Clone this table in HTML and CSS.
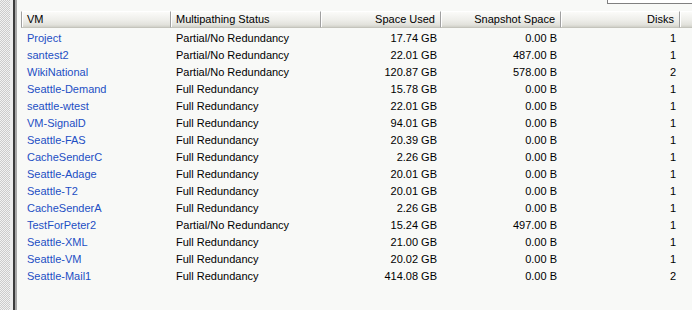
FILE: index.html
```html
<!DOCTYPE html>
<html>
<head>
<meta charset="utf-8">
<link rel="stylesheet" href="styles.css">
</head>
<body>
<div class="frame">
  <div class="side">
    <div class="checker"></div>
    <div class="light"></div>
    <div class="dark"></div>
    <div class="mid"></div>
  </div>
  <div class="main">
    <div class="topbar"><div class="box"></div></div>
    <div class="grid">
      <div class="hd">VM</div>
      <div class="hd">Multipathing Status</div>
      <div class="hd r">Space Used</div>
      <div class="hd r">Snapshot Space</div>
      <div class="hd r">Disks</div>
      <div class="hd last"></div>

      <div class="c link">Project</div><div class="c">Partial/No Redundancy</div><div class="c r">17.74 GB</div><div class="c r">0.00 B</div><div class="c r">1</div><div class="c"></div>
      <div class="c link">santest2</div><div class="c">Partial/No Redundancy</div><div class="c r">22.01 GB</div><div class="c r">487.00 B</div><div class="c r">1</div><div class="c"></div>
      <div class="c link">WikiNational</div><div class="c">Partial/No Redundancy</div><div class="c r">120.87 GB</div><div class="c r">578.00 B</div><div class="c r">2</div><div class="c"></div>
      <div class="c link">Seattle-Demand</div><div class="c">Full Redundancy</div><div class="c r">15.78 GB</div><div class="c r">0.00 B</div><div class="c r">1</div><div class="c"></div>
      <div class="c link">seattle-wtest</div><div class="c">Full Redundancy</div><div class="c r">22.01 GB</div><div class="c r">0.00 B</div><div class="c r">1</div><div class="c"></div>
      <div class="c link">VM-SignalD</div><div class="c">Full Redundancy</div><div class="c r">94.01 GB</div><div class="c r">0.00 B</div><div class="c r">1</div><div class="c"></div>
      <div class="c link">Seattle-FAS</div><div class="c">Full Redundancy</div><div class="c r">20.39 GB</div><div class="c r">0.00 B</div><div class="c r">1</div><div class="c"></div>
      <div class="c link">CacheSenderC</div><div class="c">Full Redundancy</div><div class="c r">2.26 GB</div><div class="c r">0.00 B</div><div class="c r">1</div><div class="c"></div>
      <div class="c link">Seattle-Adage</div><div class="c">Full Redundancy</div><div class="c r">20.01 GB</div><div class="c r">0.00 B</div><div class="c r">1</div><div class="c"></div>
      <div class="c link">Seattle-T2</div><div class="c">Full Redundancy</div><div class="c r">20.01 GB</div><div class="c r">0.00 B</div><div class="c r">1</div><div class="c"></div>
      <div class="c link">CacheSenderA</div><div class="c">Full Redundancy</div><div class="c r">2.26 GB</div><div class="c r">0.00 B</div><div class="c r">1</div><div class="c"></div>
      <div class="c link">TestForPeter2</div><div class="c">Partial/No Redundancy</div><div class="c r">15.24 GB</div><div class="c r">497.00 B</div><div class="c r">1</div><div class="c"></div>
      <div class="c link">Seattle-XML</div><div class="c">Full Redundancy</div><div class="c r">21.00 GB</div><div class="c r">0.00 B</div><div class="c r">1</div><div class="c"></div>
      <div class="c link">Seattle-VM</div><div class="c">Full Redundancy</div><div class="c r">20.02 GB</div><div class="c r">0.00 B</div><div class="c r">1</div><div class="c"></div>
      <div class="c link">Seattle-Mail1</div><div class="c">Full Redundancy</div><div class="c r">414.08 GB</div><div class="c r">0.00 B</div><div class="c r">2</div><div class="c"></div>
    </div>
  </div>
</div>
</body>
</html>
```

FILE: styles.css
```css
html, body {
  margin: 0;
  padding: 0;
  background: #f8f9f7;
}
body {
  font-family: "Liberation Sans", Arial, sans-serif;
  font-size: 11px;
  color: #000;
}
.frame {
  display: flex;
  width: 692px;
  height: 310px;
  overflow: hidden;
}
.side {
  display: flex;
  flex: 0 0 17px;
}
.checker {
  width: 10px;
  background-color: #e4e4e4;
  background-image: repeating-conic-gradient(#cccccc 0 25%, #f2f2f2 0 50%);
  background-size: 2px 2px;
}
.light { width: 3px; background: #ececec; }
.dark { width: 2px; background: #3c3c3c; }
.mid { width: 2px; background: #a8a8a8; }
.main {
  flex: 1;
  display: flex;
  flex-direction: column;
  padding-left: 4px;
}
.topbar {
  height: 11px;
  display: flex;
  justify-content: flex-end;
}
.box {
  width: 84px;
  height: 3px;
  background: #fff;
  border-left: 1px solid #808080;
  border-bottom: 1px solid #808080;
}
.grid {
  display: grid;
  grid-template-columns: 150px 150px 120px 120px 119px 1fr;
  grid-template-rows: 19px;
  grid-auto-rows: 17px;
}
.hd {
  align-self: start;
  height: 15px;
  line-height: 15px;
  padding: 0 5px;
  background: linear-gradient(#fbfbf9 0%, #efefeb 50%, #e2e2dc 85%, #d0d0c8 100%);
  border-top: 1px solid #ffffff;
  border-bottom: 1px solid #c4c4bc;
  border-right: 1px solid #a0a0a0;
  box-shadow: inset 1px 0 0 #ffffff;
  color: #000;
  white-space: nowrap;
  overflow: hidden;
}
.hd:first-child {
  border-left: 1px solid #a0a0a0;
  padding-left: 5px;
}
.hd.last { border-right: none; }
.c {
  line-height: 17px;
  padding: 0 4px 0 5px;
  white-space: nowrap;
  overflow: hidden;
}
.c:nth-child(6n+1) { padding-left: 6px; }
.r { text-align: right; }
.hd.r { padding-right: 5px; }
.link { color: #1d4fc4; }
```
